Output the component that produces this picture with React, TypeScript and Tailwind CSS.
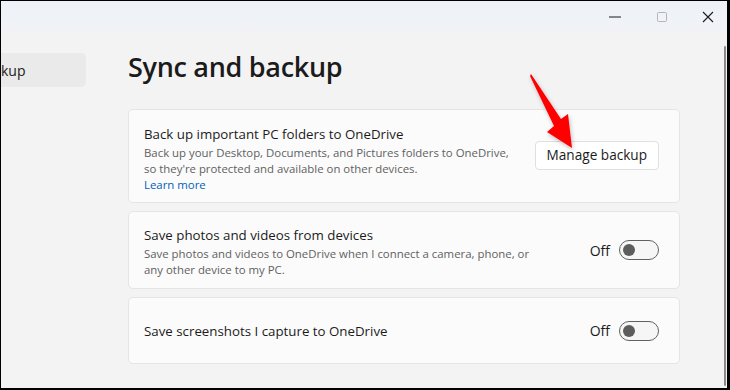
import React from 'react';

const font = { fontFamily: '"Open Sans", "Noto Sans", sans-serif' };

const Toggle: React.FC = () => (
  <div className="flex items-center gap-[9px]">
    <span className="text-[14px] text-[#1b1b1b]">Off</span>
    <div className="w-[40px] h-[20px] rounded-full border border-[#616161] bg-[#f6f6f6] flex items-center pl-[3px]">
      <div className="w-[12px] h-[12px] rounded-full bg-[#5d5d5d]"></div>
    </div>
  </div>
);

const Card: React.FC<{ title: string; lines?: string[]; link?: string; right: React.ReactNode; h: string }> = ({ title, lines, link, right, h }) => (
  <div className={`flex items-center justify-between bg-[#fbfbfb] border border-[#e5e5e5] rounded-[5px] pl-[15px] pr-[20px] ${h}`}>
    <div className={lines ? 'flex flex-col pt-[2px]' : 'flex flex-col'}>
      <div className="text-[13.3px] leading-[22px] text-[#1b1b1b]">{title}</div>
      {lines?.map((l) => (
        <div key={l} className="text-[11.4px] leading-[16px] text-[#616161]">{l}</div>
      ))}
      {link && <div className="text-[11.4px] leading-[15px] text-[#005fb8]">{link}</div>}
    </div>
    {right}
  </div>
);

const App: React.FC = () => {
  return (
    <div className="w-[730px] h-[390px] relative overflow-hidden bg-[#f3f3f3] border border-black border-r-[3px] border-b-[2px]" style={font}>
      {/* Title bar */}
      <div className="h-[32px] flex justify-end items-center bg-gradient-to-b from-[#eef2f8] to-[#f1f3f6] pr-[13px]">
        <div className="flex items-center gap-[34px] text-[#1b1b1b]">
          <svg width="14" height="14" viewBox="0 0 14 14"><line x1="1" y1="7" x2="13" y2="7" stroke="#1b1b1b" strokeWidth="1" /></svg>
          <svg width="12" height="12" viewBox="0 0 12 12"><rect x="1.5" y="1.5" width="9" height="9" rx="1" fill="none" stroke="#b4b4b4" strokeWidth="1" /></svg>
          <svg width="12" height="12" viewBox="0 0 12 12"><path d="M1 1 L11 11 M11 1 L1 11" stroke="#1b1b1b" strokeWidth="1.1" /></svg>
        </div>
      </div>

      <div className="flex">
        {/* Sidebar */}
        <div className="w-[85px] pt-[20px]">
          <div className="h-[34px] bg-[#eaeaea] rounded-r-[5px] flex items-center text-[14px] text-[#1b1b1b]">kup</div>
        </div>

        {/* Main */}
        <div className="ml-[42px] w-[552px] pt-[14px]">
          <h1 className="text-[27px] leading-[40px] font-semibold text-[#1b1b1b] tracking-[-0.3px]">Sync and backup</h1>
          <div className="mt-[22px] flex flex-col gap-[8px]">
            <Card
              h="h-[94px]"
              title="Back up important PC folders to OneDrive"
              lines={['Back up your Desktop, Documents, and Pictures folders to OneDrive,', "so they're protected and available on other devices."]}
              link="Learn more"
              right={
                <div className="h-[29px] px-[11px] bg-white border border-[#e0e0e0] rounded-[4px] flex items-center text-[13.6px] text-[#1b1b1b] -mt-[2px]">Manage backup</div>
              }
            />
            <Card
              h="h-[78px]"
              title="Save photos and videos from devices"
              lines={['Save photos and videos to OneDrive when I connect a camera, phone, or', 'any other device to my PC.']}
              right={<Toggle />}
            />
            <Card h="h-[67px]" title="Save screenshots I capture to OneDrive" right={<Toggle />} />
          </div>
        </div>
      </div>

      {/* Scrollbar */}
      <div className="absolute right-[1px] top-[45px] w-[2px] h-[340px] bg-[#8a8a8a] rounded-full"></div>

      {/* Red arrow annotation */}
      <svg className="absolute left-0 top-0" width="730" height="390" viewBox="0 0 730 390">
        <defs>
          <filter id="sh" x="-50%" y="-50%" width="200%" height="200%">
            <feDropShadow dx="1" dy="2" stdDeviation="2" floodColor="#000" floodOpacity="0.25" />
          </filter>
        </defs>
        <polygon points="530,73 560,118 567,113 571,147 546,131 553,125 529,75" fill="#ff0000" filter="url(#sh)" />
      </svg>
    </div>
  );
};

export default App;
